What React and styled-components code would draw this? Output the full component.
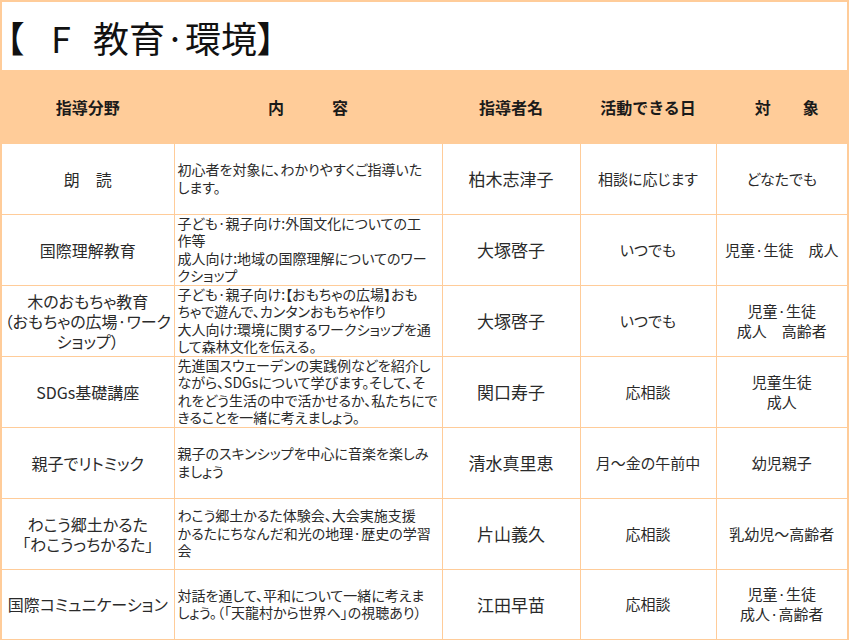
import React from "react";
import styled, { createGlobalStyle } from "styled-components";

const GlobalStyle = createGlobalStyle`
  body {
    margin: 0;
    background: #ffffff;
    font-family: "Noto Sans CJK JP", "Noto Sans", sans-serif;
    color: #222;
  }
`;

const LINE = "#ffcc99";

const rows = [
  {
    field: ["朗　読"],
    content: ["初心者を対象に、わかりやすくご指導いた", "します。"],
    leader: "柏木志津子",
    days: "相談に応じます",
    target: ["どなたでも"],
  },
  {
    field: ["国際理解教育"],
    content: [
      "子ども·親子向け:外国文化についての工",
      "作等",
      "成人向け:地域の国際理解についてのワー",
      "クショップ",
    ],
    leader: "大塚啓子",
    days: "いつでも",
    target: ["児童·生徒　成人"],
  },
  {
    field: ["木のおもちゃ教育", "（おもちゃの広場·ワーク", "ショップ）"],
    content: [
      "子ども·親子向け:【おもちゃの広場】おも",
      "ちゃで遊んで、カンタンおもちゃ作り",
      "大人向け:環境に関するワークショップを通",
      "して森林文化を伝える。",
    ],
    leader: "大塚啓子",
    days: "いつでも",
    target: ["児童·生徒", "成人　高齢者"],
  },
  {
    field: ["SDGs基礎講座"],
    content: [
      "先進国スウェーデンの実践例などを紹介し",
      "ながら、SDGsについて学びます。そして、そ",
      "れをどう生活の中で活かせるか、私たちにで",
      "きることを一緒に考えましょう。",
    ],
    leader: "関口寿子",
    days: "応相談",
    target: ["児童生徒", "成人"],
  },
  {
    field: ["親子でリトミック"],
    content: ["親子のスキンシップを中心に音楽を楽しみ", "ましょう"],
    leader: "清水真里恵",
    days: "月～金の午前中",
    target: ["幼児親子"],
  },
  {
    field: ["わこう郷土かるた", "「わこうっちかるた」"],
    content: [
      "わこう郷土かるた体験会、大会実施支援",
      "かるたにちなんだ和光の地理·歴史の学習",
      "会",
    ],
    leader: "片山義久",
    days: "応相談",
    target: ["乳幼児～高齢者"],
  },
  {
    field: ["国際コミュニケーション"],
    content: [
      "対話を通して、平和について一緒に考えま",
      "しょう。（「天龍村から世界へ」の視聴あり）",
    ],
    leader: "江田早苗",
    days: "応相談",
    target: ["児童·生徒", "成人·高齢者"],
  },
];

const Lines = ({ lines }) =>
  lines.map((line, i) => (
    <React.Fragment key={i}>
      {i > 0 && <br />}
      {line}
    </React.Fragment>
  ));

export default function App() {
  return (
    <>
      <GlobalStyle />
      <Table>
        <colgroup>
          <col style={{ width: 173 }} />
          <col style={{ width: 268 }} />
          <col style={{ width: 138 }} />
          <col style={{ width: 136 }} />
          <col style={{ width: 132 }} />
        </colgroup>
        <thead>
          <TitleRow>
            <TitleCell colSpan={5}>
              <Bracket>【</Bracket>
              <Gap $w={27} />F<Gap $w={22} />
              教育·環境
              <Bracket>】</Bracket>
            </TitleCell>
          </TitleRow>
          <HeadRow>
            <HeadCell>指導分野</HeadCell>
            <HeadCell>内　　　容</HeadCell>
            <HeadCell>指導者名</HeadCell>
            <HeadCell>活動できる日</HeadCell>
            <HeadCell $shift={10}>対　　象</HeadCell>
          </HeadRow>
        </thead>
        <tbody>
          {rows.map((row, i) => (
            <BodyRow key={i}>
              <FieldCell>
                <Lines lines={row.field} />
              </FieldCell>
              <ContentCell>
                <Lines lines={row.content} />
              </ContentCell>
              <NameCell>{row.leader}</NameCell>
              <SmallCell>{row.days}</SmallCell>
              <SmallCell>
                <Lines lines={row.target} />
              </SmallCell>
            </BodyRow>
          ))}
        </tbody>
      </Table>
    </>
  );
}

const Table = styled.table`
  width: 847px;
  table-layout: fixed;
  border-collapse: collapse;
  border: 2px solid ${LINE};
`;

const TitleRow = styled.tr`
  height: 70px;
`;

const TitleCell = styled.th`
  background: #ffffff;
  text-align: left;
  font-weight: normal;
  font-size: 36px;
  padding: 2px 0 0 4px;
  color: #111;
  white-space: nowrap;
  border: 2px solid ${LINE};
`;

const Bracket = styled.span`
  font-feature-settings: "palt";
`;

const Gap = styled.span`
  display: inline-block;
  width: ${(p) => p.$w}px;
`;

const HeadRow = styled.tr`
  height: 72px;
`;

const HeadCell = styled.th`
  background: ${LINE};
  font-size: 16px;
  font-weight: bold;
  color: #1a1a1a;
  text-align: center;
  padding: 0 0 0 ${(p) => p.$shift || 0}px;
  border: 1px solid ${LINE};
`;

const BodyRow = styled.tr`
  height: 71px;
`;

const Cell = styled.td`
  border: 1px solid ${LINE};
  vertical-align: middle;
  white-space: nowrap;
  color: #2a2a2a;
  font-feature-settings: "palt";
  overflow: visible;
`;

const FieldCell = styled(Cell)`
  font-size: 16px;
  line-height: 20px;
  text-align: center;
  padding: 0 2px;
`;

const ContentCell = styled(Cell)`
  font-size: 14px;
  line-height: 17.5px;
  text-align: left;
  padding: 0 3px;
`;

const NameCell = styled(Cell)`
  font-size: 17px;
  text-align: center;
  font-feature-settings: normal;
  padding: 0;
`;

const SmallCell = styled(Cell)`
  font-size: 15px;
  line-height: 20px;
  text-align: center;
  padding: 0;
`;
